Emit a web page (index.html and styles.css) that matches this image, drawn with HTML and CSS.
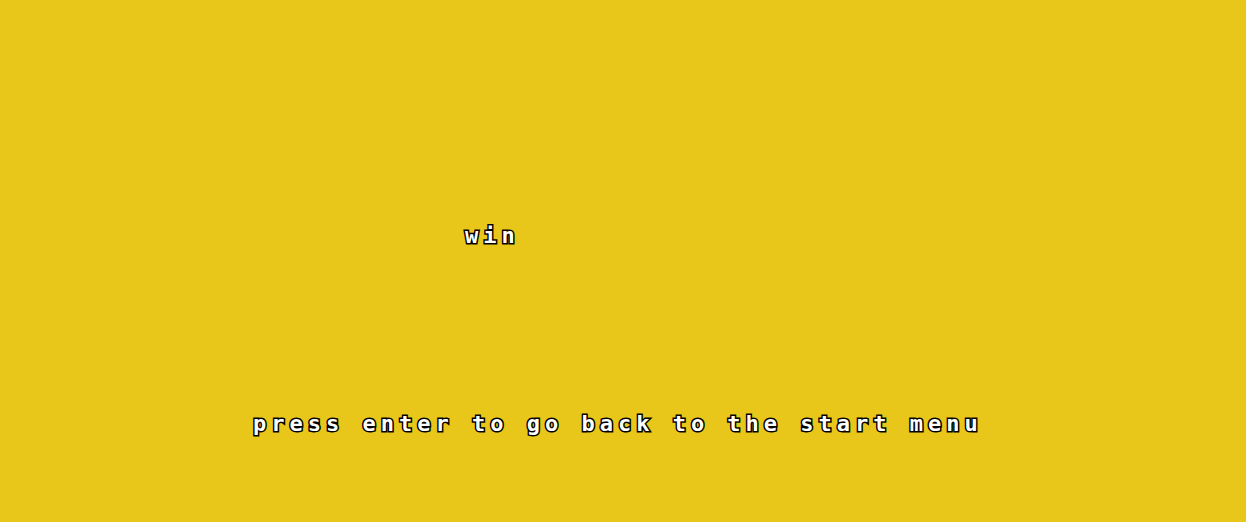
FILE: index.html
```html
<!DOCTYPE html>
<html>
<head>
<meta charset="utf-8">
<link rel="stylesheet" href="styles.css">
</head>
<body>
<main class="screen">
  <div class="title">win</div>
  <div class="hint">press enter to go back to the start menu</div>
</main>
</body>
</html>
```
FILE: styles.css
```css
html, body {
  margin: 0;
  padding: 0;
  width: 100%;
  height: 100%;
  background: #e9c71a;
  overflow: hidden;
}
.screen {
  display: flex;
  flex-direction: column;
  align-items: flex-start;
  padding-top: 222px;
}
.title, .hint {
  font-family: "DejaVu Sans Mono", monospace;
  font-weight: bold;
  font-size: 22px;
  line-height: 28px;
  letter-spacing: 5px;
  color: #ffffff;
  -webkit-text-stroke: 3px #000000;
  paint-order: stroke fill;
}
.title {
  margin-left: 465px;
}
.hint {
  margin-left: 253px;
  margin-top: 160px;
}
```
